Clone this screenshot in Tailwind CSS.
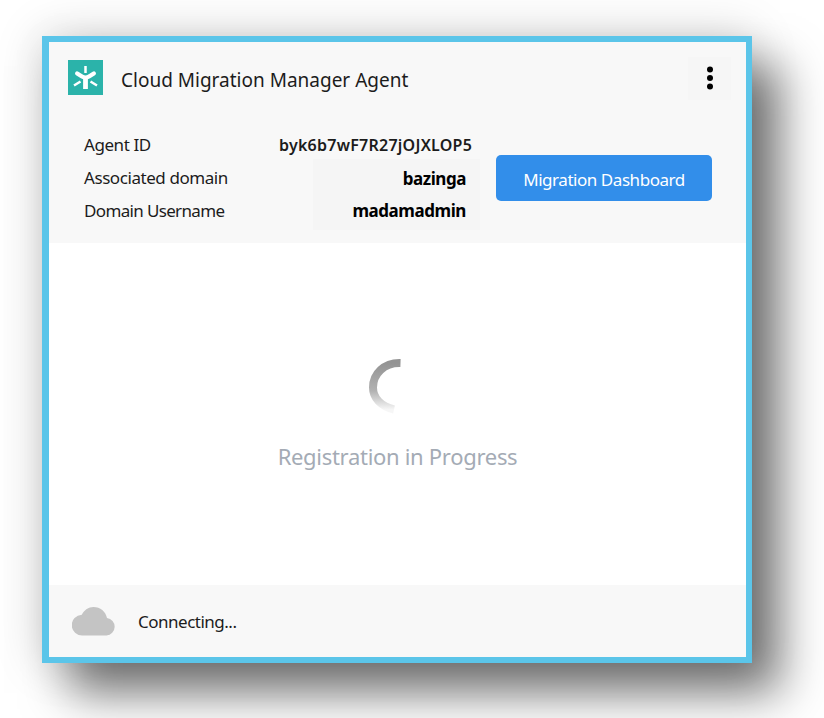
<!DOCTYPE html>
<html lang="en">
<head>
<meta charset="utf-8">
<title>Cloud Migration Manager Agent</title>
<script src="https://cdn.jsdelivr.net/npm/@tailwindcss/browser@4"></script>
</head>
<body class="h-[718px] w-[824px] overflow-hidden bg-white pl-[42px] pt-9 font-['Noto_Sans','Open_Sans',sans-serif] text-[#1c1c1c]">
<main class="flex h-[627px] w-[710px] flex-col border-6 border-l-7 border-[#5bc5e9] bg-white shadow-[28px_30px_44px_rgba(0,0,0,0.53),0_0_44px_rgba(0,0,0,0.18)]">
  <header class="h-[201px] bg-[#f8f8f8]">
    <div class="flex h-[78px] items-center pl-[19px] pr-[15px]">
      <svg class="-mt-2 h-[35px] w-[35px]" viewBox="0 0 35 35" fill="none" stroke="#fff">
        <rect width="35" height="35" fill="#2bb3aa" stroke="none"/>
        <path d="M17.500 6v7M6 25.500l6.500-4M29 25.500 22.500 21.500" stroke-width="2.500"/>
        <path d="M9.200 13.500 14 16.500Q17.500 18.700 21 16.500L25.800 13.500" stroke-width="4.300" stroke-linecap="round"/>
        <path d="M17.500 17v12" stroke-width="4.800"/>
      </svg>
      <h1 class="-mt-0.5 ml-[18px] whitespace-nowrap text-[19px] leading-7">Cloud Migration Manager Agent</h1>
      <button class="-mt-1.5 ml-auto flex h-[43px] w-[43px] items-center justify-center bg-[#f6f6f6]" aria-label="Menu">
        <svg class="h-6 w-2" viewBox="0 0 8 24" fill="#000"><circle cx="4" cy="3.500" r="3"/><circle cx="4" cy="12" r="3"/><circle cx="4" cy="20.500" r="3"/></svg>
      </button>
    </div>
    <div class="flex pl-[35px]">
      <dl class="grid w-[396px] grid-cols-[195px_201px] grid-rows-[33px_33px_33px] items-center whitespace-nowrap pt-2 text-[17px] leading-8 tracking-[-0.43px]">
        <dt>Agent ID</dt><dd class="text-[16px] font-semibold tracking-[0.25px]">byk6b7wF7R27jOJXLOP5</dd>
        <dt>Associated domain</dt>
        <dd class="row-span-2 ml-[34px] flex h-[71px] flex-col items-end bg-[#f5f5f5] pr-3.5 pt-1 font-bold text-black"><span>bazinga</span><span>madamadmin</span></dd>
        <dt class="tracking-[-0.65px]">Domain Username</dt>
      </dl>
      <button class="ml-4 mt-[35px] h-[46px] w-[216px] rounded-[5px] bg-[#328eea] pt-[3px] text-[17px] tracking-[-0.45px] text-white">Migration Dashboard</button>
    </div>
  </header>
  <section class="flex flex-1 flex-col items-center pt-[115px]">
    <svg class="h-[58px] w-[58px]" viewBox="0 0 58 58" fill="none">
      <defs><linearGradient id="fade" x1="0" y1="0" x2="0" y2="1"><stop stop-color="#939393"/><stop offset=".6" stop-color="#b2b2b2"/><stop offset="1" stop-color="#f6f6f6"/></linearGradient></defs>
      <path d="M31.500 5C15 4.500 4 16 4 29.500C4 40 12 48.500 25 51.500" stroke="url(#fade)" stroke-width="8"/>
    </svg>
    <p class="mt-6 text-[22px] leading-8 tracking-[-0.3px] text-[#a4abb5]">Registration in Progress</p>
  </section>
  <footer class="flex h-[72px] items-center bg-[#f8f8f8] pl-[23px] text-[17px] tracking-[-0.5px]">
    <svg class="h-[29px] w-[43px]" viewBox="0 0 43 29" fill="#c4c4c4"><path d="M10.500 28.500A10.400 10.400 0 0 1 9.800 7.700C12.300 3 16.500 0 21.500 0c6.700 0 12.300 4.500 13.500 11a8.800 8.800 0 0 1-.5 17.500Z"/></svg>
    <span class="ml-[23px] mt-0.5">Connecting...</span>
  </footer>
</main>
</body>
</html>
